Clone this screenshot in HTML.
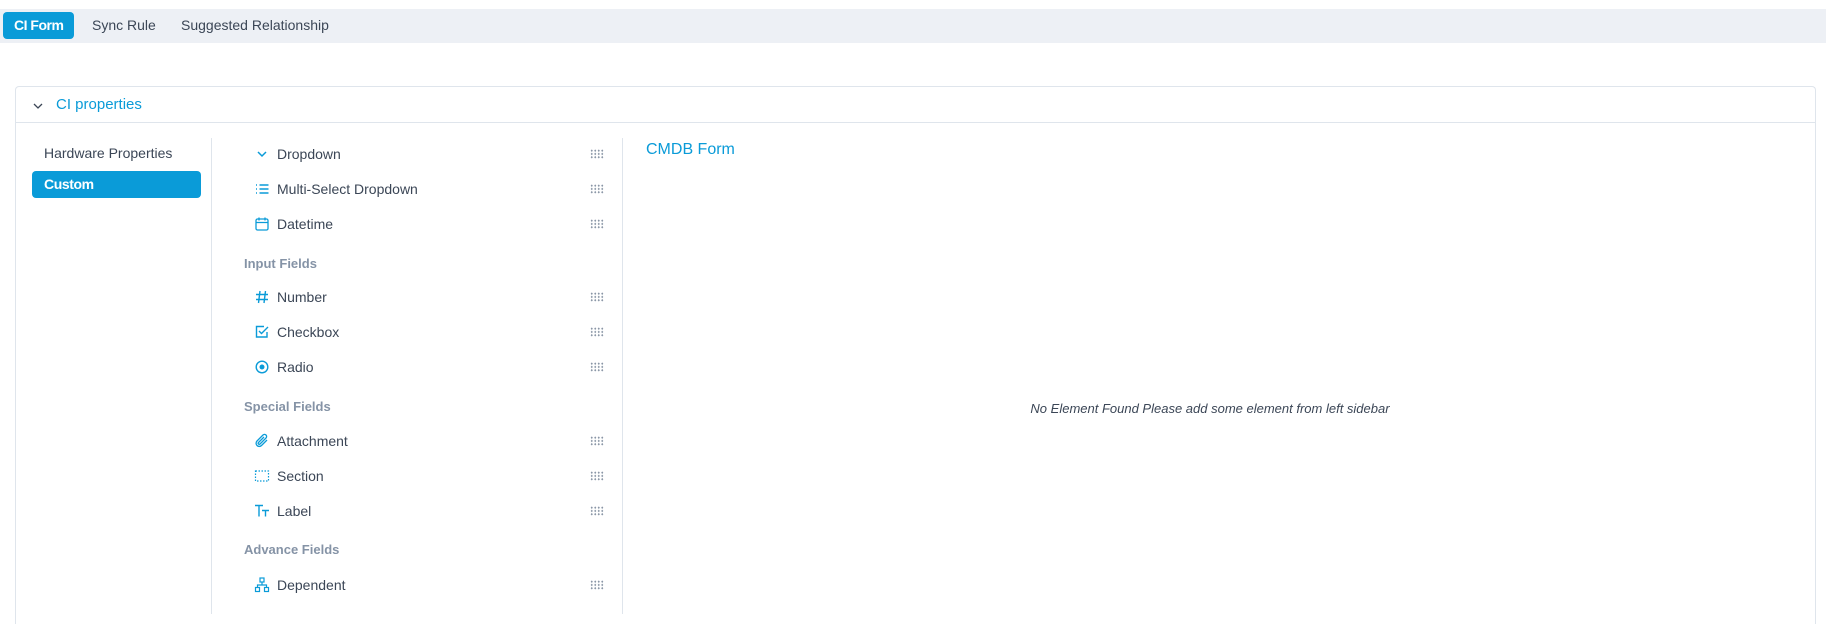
<!DOCTYPE html>
<html><head><meta charset="utf-8"><style>
*{box-sizing:border-box;margin:0;padding:0}
html,body{width:1826px;height:624px;overflow:hidden}
body{background:#fff;font-family:"Liberation Sans",sans-serif;color:#3b4656;position:relative}
.abs{position:absolute}
.tabbar{left:0;top:9px;width:1826px;height:34px;background:#edf0f5}
.tab{position:absolute;top:3px;height:27px;line-height:27px;font-size:14px;color:#3b4656}
.tab.act{background:#0a9bd8;color:#fff;border-radius:4px;padding:0 11px;left:3px;font-weight:bold;letter-spacing:-.5px}
.card{left:15px;top:86px;width:1801px;height:538px;border:1px solid #dfe5ec;border-bottom:none;border-radius:4px 4px 0 0}
.hdr{left:0;top:0;width:100%;height:36px;border-bottom:1px solid #dfe5ec}
.blue{color:#0a9bd8}
.item{position:absolute;left:254px;height:20px;font-size:14px;line-height:20px}
.item svg{position:absolute;left:0;top:2px}
.item span{position:absolute;left:23px;white-space:nowrap}
.sec{position:absolute;left:244px;font-size:13px;font-weight:bold;color:#8593a6}
.drag{position:absolute;left:590px;width:14px;height:10px;background-image:radial-gradient(circle,#8a96a6 0.9px,transparent 1.1px);background-size:3.5px 3.3px}
</style></head><body>
<div class="abs tabbar">
 <div class="tab act">CI Form</div>
 <div class="tab" style="left:92px">Sync Rule</div>
 <div class="tab" style="left:181px">Suggested Relationship</div>
</div>
<div class="abs card">
 <div class="abs hdr">
  <svg class="abs" style="left:16px;top:13px" width="12" height="12" viewBox="0 0 12 12"><path d="M2 4l4 4 4-4" fill="none" stroke="#3b4656" stroke-width="1.3"/></svg>
  <div class="abs blue" style="left:40px;top:9px;font-size:15px">CI properties</div>
 </div>
</div>
<div class="abs" style="left:44px;top:145px;font-size:14px">Hardware Properties</div>
<div class="abs" style="left:32px;top:171px;width:169px;height:27px;background:#0a9bd8;border-radius:4px;color:#fff;font-size:14px;font-weight:bold;line-height:27px;padding-left:12px;letter-spacing:-.4px">Custom</div>
<div class="abs" style="left:211px;top:138px;width:1px;height:476px;background:#dfe5ec"></div>
<div class="abs" style="left:622px;top:138px;width:1px;height:476px;background:#dfe5ec"></div>

<div class="item" style="top:144px"><svg width="16" height="16" viewBox="0 0 16 16"><path d="M4 6l4 4 4-4" fill="none" stroke="#0a9bd8" stroke-width="1.5"/></svg><span>Dropdown</span></div>
<div class="item" style="top:179px"><svg width="16" height="16" viewBox="0 0 16 16"><path d="M2 4h1M2 8h1M2 12h1M5.5 4h9M5.5 8h9M5.5 12h9" stroke="#0a9bd8" stroke-width="1.4"/></svg><span>Multi-Select Dropdown</span></div>
<div class="item" style="top:214px"><svg width="16" height="16" viewBox="0 0 16 16"><rect x="2" y="3" width="12" height="11" rx="1.5" fill="none" stroke="#0a9bd8" stroke-width="1.3"/><path d="M2 6.5h12M5 1.5v3M11 1.5v3" stroke="#0a9bd8" stroke-width="1.3"/></svg><span>Datetime</span></div>
<div class="sec" style="top:256px">Input Fields</div>
<div class="item" style="top:287px"><svg width="16" height="16" viewBox="0 0 16 16"><path d="M6 2l-1.5 12M11.5 2L10 14M2 5.5h12M2 10.5h12" stroke="#0a9bd8" stroke-width="1.4"/></svg><span>Number</span></div>
<div class="item" style="top:322px"><svg width="16" height="16" viewBox="0 0 16 16"><path d="M13 8v5H2.5V2.5H10" fill="none" stroke="#0a9bd8" stroke-width="1.4"/><path d="M5 7l2.5 2.5L14 3" fill="none" stroke="#0a9bd8" stroke-width="1.4"/></svg><span>Checkbox</span></div>
<div class="item" style="top:357px"><svg width="16" height="16" viewBox="0 0 16 16"><circle cx="8" cy="8" r="5.8" fill="none" stroke="#0a9bd8" stroke-width="1.4"/><circle cx="8" cy="8" r="2.5" fill="#0a9bd8"/></svg><span>Radio</span></div>
<div class="sec" style="top:399px">Special Fields</div>
<div class="item" style="top:431px"><svg width="16" height="16" viewBox="0 0 16 16"><path d="M13 7l-5.5 5.5a3 3 0 01-4.5-4.5L9 2a2 2 0 013 3L6 11a1 1 0 01-1.5-1.5L10 4" fill="none" stroke="#0a9bd8" stroke-width="1.3"/></svg><span>Attachment</span></div>
<div class="item" style="top:466px"><svg width="16" height="16" viewBox="0 0 16 16"><rect x="1.5" y="3" width="13" height="10" fill="none" stroke="#0a9bd8" stroke-width="1.2" stroke-dasharray="1.5 1.5"/></svg><span>Section</span></div>
<div class="item" style="top:501px"><svg width="16" height="16" viewBox="0 0 16 16"><path d="M1 2.5h8M5 2.5v11M8 7.5h7M11.5 7.5v6" stroke="#0a9bd8" stroke-width="1.4"/></svg><span>Label</span></div>
<div class="sec" style="top:542px">Advance Fields</div>
<div class="item" style="top:575px"><svg width="16" height="16" viewBox="0 0 16 16"><rect x="6" y="1" width="4" height="4" fill="none" stroke="#0a9bd8" stroke-width="1.2"/><rect x="1.5" y="10.5" width="4" height="4" fill="none" stroke="#0a9bd8" stroke-width="1.2"/><rect x="10.5" y="10.5" width="4" height="4" fill="none" stroke="#0a9bd8" stroke-width="1.2"/><path d="M8 5v3M3.5 10.5V8h9v2.5" fill="none" stroke="#0a9bd8" stroke-width="1.2"/></svg><span>Dependent</span></div>

<div class="drag" style="top:149px"></div>
<div class="drag" style="top:184px"></div>
<div class="drag" style="top:219px"></div>
<div class="drag" style="top:292px"></div>
<div class="drag" style="top:327px"></div>
<div class="drag" style="top:362px"></div>
<div class="drag" style="top:436px"></div>
<div class="drag" style="top:471px"></div>
<div class="drag" style="top:506px"></div>
<div class="drag" style="top:580px"></div>

<div class="abs blue" style="left:646px;top:141px;font-size:16px">CMDB Form</div>
<div class="abs" style="left:0;width:2420px;top:401px;text-align:center;font-size:13px;font-style:italic;color:#3b4656">No Element Found Please add some element from left sidebar</div>
</body></html>
